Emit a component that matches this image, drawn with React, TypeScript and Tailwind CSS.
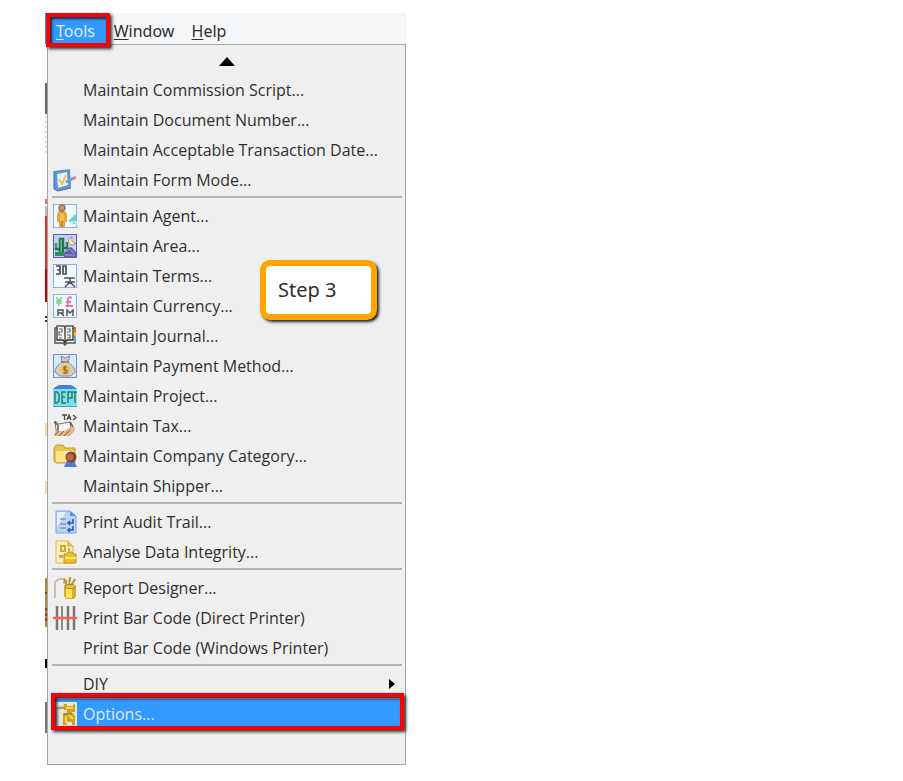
import React from "react";

type Entry = { label: string; icon?: React.ReactNode; submenu?: boolean; selected?: boolean };

function Icon({ children }: { children: React.ReactNode }) {
  return (
    <svg viewBox="0 0 24 24" className="h-6 w-6" aria-hidden="true">
      {children}
    </svg>
  );
}

const frame = <rect x=".5" y=".5" width="23" height="23" fill="#f2f9ff" stroke="#8caee8" />;

const formMode = (
  <Icon>
    <path d="M1 3 17 1l1 19-13 3-4-2z" fill="#5b93d6" />
    <path d="M1 3v18l4 2 13-3" fill="none" stroke="#3b6fb5" />
    <path d="M4 6l10-2 1 13-10 3z" fill="#eaf3fb" />
    <path d="M6 11l3 5 4-9" fill="none" stroke="#e8c860" strokeWidth="2" />
    <path d="M13 14l8-4" stroke="#6ba0dc" strokeWidth="3" />
    <path d="M20 10.500l3-1.500" stroke="#d58d80" strokeWidth="3" />
  </Icon>
);

const agent = (
  <Icon>
    {frame}
    <path d="M6 7h6l2 3v8h-2v5H6v-5H4v-8z" fill="#e9a53c" />
    <path d="M9 8v15" stroke="#a46b1c" />
    <path d="M7 9h4v8H7z" fill="#f6bd52" />
    <circle cx="9" cy="4" r="3.200" fill="#c99467" stroke="#79583f" />
    <path d="M23 10v10h-3v-2l-5-1z" fill="#62d1d8" />
    <path d="M17 18h6v3" fill="none" stroke="#b7e8ef" strokeWidth="2" />
  </Icon>
);

const area = (
  <Icon>
    <rect x=".5" y=".5" width="23" height="23" fill="#c3cff5" stroke="#5d5bb5" />
    <path d="M3 9v6h3m1 6V5h3v14m0-5h4V8" fill="none" stroke="#207447" strokeWidth="2.500" />
    <path d="M8 5v15M3 9v5M13 8v5" stroke="#67c58a" />
    <path d="M19 3a4 4 0 1 0 4 6c-3 1-5-2-4-6z" fill="#fff19a" stroke="#756a8e" strokeWidth=".6" />
    <path d="M11 19l4-5 3-1 5 5v5H11z" fill="#625fa9" />
    <path d="M13 18l3-3 5 4M12 21h10" fill="none" stroke="#a9a7e5" />
    <path d="M2 18h9v4H2z" fill="#2c905c" />
  </Icon>
);

const terms = (
  <Icon>
    {frame}
    <path d="M3 2h4v8H3M4 6h3M10 2h3v8h-3z" fill="none" stroke="#4d4d52" strokeWidth="1.700" />
    <path d="M11 14h11M12 18h10M17 14v4l-5 5M17 18l5 5" fill="none" stroke="#565656" strokeWidth="1.600" />
  </Icon>
);

const currency = (
  <Icon>
    {frame}
    <path d="M3 3l3 4 3-4M6 7v5M3 7h6M3 9h6" fill="none" stroke="#78d987" strokeWidth="1.500" />
    <path d="M19 4c-3-2-5 0-4 3v4l-2 1h7M13 8h5" fill="none" stroke="#e36ebd" strokeWidth="1.800" />
    <path d="M5 22v-6h5v3H5m3 0 3 3M14 22v-6l3 3 3-3v6" fill="none" stroke="#555" strokeWidth="1.500" />
  </Icon>
);

const journal = (
  <Icon>
    <path d="M2 4h2V2h7l1 2 1-2h7v2h2v15h-8l-2 2-2-2H2z" fill="#f7f7f4" stroke="#555" strokeWidth="1.500" />
    <path d="M4 4v12h6l2 3 2-3h6V4M12 4v15" fill="none" stroke="#333" strokeWidth="1.300" />
    <path d="M6 5h3v3H6v3h3M6 14h3M14 5h3v3h-3M14 11h3v3h-3" fill="none" stroke="#696969" strokeWidth="1.200" />
    <path d="M22 4v4" stroke="#d76845" strokeWidth="2" />
    <path d="M22 8v4" stroke="#e5bd4a" strokeWidth="2" />
    <path d="M22 12v6" stroke="#58a7c2" strokeWidth="2" />
  </Icon>
);

const payment = (
  <Icon>
    <rect x=".5" y=".5" width="23" height="23" fill="#d8e9fb" stroke="#6e91df" />
    <path d="M8 2l4 2 5-2-2 6c4 3 7 6 7 10l-4 4H7l-5-4c0-4 3-7 7-10z" fill="#d3d0c3" stroke="#8b8b88" />
    <path d="M8 8h8" stroke="#777" strokeWidth="1.500" />
    <circle cx="12" cy="16" r="5" fill="#efbf55" />
    <path d="M14 13h-3v3h3v3h-4M12 12v8" fill="none" stroke="#8f6b32" strokeWidth="1.200" />
  </Icon>
);

const project = (
  <Icon>
    <path d="M0 5c3-2 4-4 8-4h8c4 0 5 2 8 4z" fill="#477be5" />
    <path d="M0 5h24v17H0z" fill="#78e4e8" />
    <path d="M2 8v11h2l2-2V10L4 8zM13 8H9v11h4M9 13h3M15 19V8h4v6h-4M20 8h4M22 8v11" fill="none" stroke="#35757b" strokeWidth="1.500" />
    <path d="M0 22.500h24" stroke="#43a9b3" />
  </Icon>
);

const tax = (
  <Icon>
    <path d="M9 1h5M11.500 1v5M14 6l2-5 2 5M15 4h3M20 1l3 2.500-3 2.500" fill="none" stroke="#4d4843" strokeWidth="1.300" />
    <path d="M2 7l4 3 11-2 1 8-8 3-7-3z" fill="#fafafa" stroke="#77736e" />
    <path d="M1 8l4 3v5M17 8l3 5-4 6" fill="none" stroke="#5b5650" strokeWidth="1.500" />
    <path d="M2 17h9l5-3 5-2 1 4-5 6H1z" fill="#dcb58a" />
    <path d="M2 21l4-4M6 22l5-5M11 22l6-6" stroke="#866544" />
  </Icon>
);

const category = (
  <Icon>
    <path d="M1 4l2-3h7l2 3h10v15H3l-2-2z" fill="#ecc24f" stroke="#c39a38" />
    <path d="M3 7h17v11H3z" fill="#ffe48a" />
    <path d="M11 8h9" stroke="#fff4bd" strokeWidth="2" />
    <path d="M11 23l3-6h7l3 6z" fill="#5279d6" />
    <circle cx="18" cy="13" r="5.500" fill="#704a43" />
    <circle cx="17" cy="13" r="3.500" fill="#cb6239" />
  </Icon>
);

const audit = (
  <Icon>
    <path d="M3 1h14l6 5v17H3z" fill="#b9d5f5" stroke="#7ba4df" />
    <path d="M4 2h9L4 17z" fill="#e4f1fe" />
    <path d="M17 1v5h6z" fill="#5b91dc" />
    <path d="M7 9h6M7 14h6M7 18h6" stroke="#8896a6" strokeWidth="1.500" />
    <path d="M20 9v4h-5m2-2-2 2 2 2M20 16v4h-5m2-2-2 2 2 2" fill="none" stroke="#315eb6" strokeWidth="1.700" />
  </Icon>
);

const integrity = (
  <Icon>
    <path d="M3 1h12l5 5v17H3z" fill="#fff1be" stroke="#ddb44e" />
    <path d="M15 1v5h5" fill="#e8c356" stroke="#cda23d" />
    <path d="M7 5h6v7H7z" fill="#d9a526" />
    <path d="M9 7h2v3H9z" fill="#fff0ac" />
    <path d="M15 8h2v3h-2zM6 15h4v3H6z" fill="#c7a555" />
    <path d="M11 14h3l1-2h4l1 2h3v9H11z" fill="#edbd28" stroke="#bd8d24" />
    <path d="M12 18h11" stroke="#ffe477" strokeWidth="2" />
  </Icon>
);

const designer = (
  <Icon>
    <path d="M2 22V6l4-3h5v5" fill="none" stroke="#c9c2a9" strokeWidth="2" />
    <path d="M14 11l-2-7M16 10l1-9M18 10l4-7M14 6l-3-3" stroke="#bd912d" strokeWidth="2" />
    <path d="M11 10h12v10l-2 3h-8l-2-3z" fill="#d5a92c" />
    <path d="M13 11h6v11h-6z" fill="#ffe55a" />
    <ellipse cx="17" cy="10.500" rx="5.500" ry="2" fill="#edc34f" stroke="#a78132" />
  </Icon>
);

const barcode = (
  <Icon>
    <path d="M4 0v24M15 0v24M21 0v24" stroke="#777" strokeWidth="2.500" />
    <path d="M9 0v24" stroke="#8b8b8b" strokeWidth="2" />
    <path d="M0 12h24" stroke="#ff5b55" strokeWidth="2.500" />
  </Icon>
);

const options = (
  <Icon>
    <path d="M2 0h22v24H2z" fill="#e6e6e1" />
    <path d="M4 23V9c0-3 3-4 8-4" fill="none" stroke="#cfcabb" strokeWidth="3" />
    <path d="M2 6h9" stroke="#ba9b54" strokeWidth="2" />
    <path d="M11 2h3v2h6V2h2v8h-3v3h3v10h-3v-3h-5v3h-4V11h4V8h-3z" fill="#d5a01b" />
    <path d="M13 6h7M13 14v7M16 13l4 4" stroke="#ffdc4d" strokeWidth="2" />
    <path d="M11 12h10" stroke="#8f7337" />
  </Icon>
);

const groups: Entry[][] = [
  [
    { label: "Maintain Commission Script..." },
    { label: "Maintain Document Number..." },
    { label: "Maintain Acceptable Transaction Date..." },
    { label: "Maintain Form Mode...", icon: formMode },
  ],
  [
    { label: "Maintain Agent...", icon: agent },
    { label: "Maintain Area...", icon: area },
    { label: "Maintain Terms...", icon: terms },
    { label: "Maintain Currency...", icon: currency },
    { label: "Maintain Journal...", icon: journal },
    { label: "Maintain Payment Method...", icon: payment },
    { label: "Maintain Project...", icon: project },
    { label: "Maintain Tax...", icon: tax },
    { label: "Maintain Company Category...", icon: category },
    { label: "Maintain Shipper..." },
  ],
  [
    { label: "Print Audit Trail...", icon: audit },
    { label: "Analyse Data Integrity...", icon: integrity },
  ],
  [
    { label: "Report Designer...", icon: designer },
    { label: "Print Bar Code (Direct Printer)", icon: barcode },
    { label: "Print Bar Code (Windows Printer)" },
  ],
  [
    { label: "DIY", submenu: true },
    { label: "Options...", icon: options, selected: true },
  ],
];

/* Frame of annotation: red outline with a dark shadow on both sides of it. */
const outline =
  "pointer-events-none absolute border-4 border-[#fb0007] shadow-[2px_2px_3px_#333,inset_2px_2px_3px_#223]";

function Row({ entry }: { entry: Entry }) {
  return (
    <li className="relative px-[4px]">
      <button
        type="button"
        className={`flex h-[30px] w-full items-center pl-px pr-[6px] text-left ${
          entry.selected ? "bg-[#3399ff] text-[#dcecff]" : ""
        }`}
      >
        <span className="mr-[6px] h-6 w-6 shrink-0">{entry.icon}</span>
        <span className="grow whitespace-nowrap">{entry.label}</span>
        {entry.submenu && (
          <svg viewBox="0 0 6 10" className="h-[10px] w-[6px]" aria-hidden="true">
            <path d="M0 0l6 5-6 5z" fill="#000" />
          </svg>
        )}
      </button>
      {entry.selected && <span className={`${outline} -top-[6px] -bottom-px left-[3px] right-px`} />}
    </li>
  );
}

/* Sliver of the window lying behind the open menu. */
function WindowEdge() {
  return (
    <svg viewBox="0 0 2 721" className="h-[721px] w-[2px] shrink-0" aria-hidden="true">
      <path d="M1 39v31" stroke="#666" strokeWidth="2" />
      <path d="M1 72v38" stroke="#ddd" strokeWidth="2" strokeDasharray="2 3" />
      <path d="M1 155v5" stroke="#e66" strokeWidth="2" />
      <path d="M1 162v10" stroke="#bbb" strokeWidth="2" />
      <path d="M1 172v86" stroke="#e32c30" strokeWidth="2" />
      <path d="M1 225v33" stroke="#c10008" strokeWidth="2" />
      <path d="M1 272v2m0 2v2" stroke="#333" strokeWidth="2" />
      <path d="M1 379v13M1 437v13" stroke="#fbd5a6" strokeWidth="2" />
      <path d="M1 534v49" stroke="#b58a35" strokeWidth="2" />
      <path d="M1 548v2m0 14v13" stroke="#a33a1b" strokeWidth="2" strokeDasharray="3 2" />
      <path d="M1 615v9" stroke="#000" strokeWidth="2" />
      <path d="M1 658v31" stroke="#777" strokeWidth="2" />
    </svg>
  );
}

export default function App() {
  return (
    <main className="min-h-screen bg-white pt-[13px] pl-[45px] font-['Noto_Sans','Open_Sans',sans-serif] text-base text-[#2f2f2f]">
      <div className="w-[361px] max-w-full">
        <nav className="flex h-[31px] bg-[#f4f6f8] leading-9">
          <div className="relative z-10 w-[65px]">
            <button type="button" className="h-full w-full bg-[#3399ff] pr-1 text-[#dcecff]">
              <u className="underline-offset-2">T</u>ools
            </button>
            <span className={`${outline} top-0 -bottom-[3px] left-px right-0`} />
          </div>
          <button type="button" className="w-[68px] text-center">
            <u className="underline-offset-2">W</u>indow
          </button>
          <button type="button" className="ml-[11px] w-10 text-center">
            <u className="underline-offset-2">H</u>elp
          </button>
        </nav>
        <div className="flex">
          <WindowEdge />
          <div className="relative min-w-0 grow border border-[#a4a4a4] bg-[#efefef] pb-[33px] font-['Open_Sans','Noto_Sans',sans-serif]">
            <button type="button" aria-label="Scroll up" className="flex h-[30px] w-full items-center justify-center pt-[2px]">
              <svg viewBox="0 0 16 9" className="h-[9px] w-4" aria-hidden="true">
                <path d="M8 0l8 9H0z" fill="#000" />
              </svg>
            </button>
            {groups.map((group, i) => (
              <ul key={i}>
                {i > 0 && (
                  <li className="flex h-[6px] items-start pr-[3px] pl-1 pt-px">
                    <hr className="h-[2px] w-full border-0 bg-[#b3b3b3]" />
                  </li>
                )}
                {group.map((entry) => (
                  <Row key={entry.label} entry={entry} />
                ))}
              </ul>
            ))}
            <div className="absolute top-[215px] left-[212px] flex h-[60px] w-[117px] items-center rounded-[10px] border-[6px] border-[#ffa500] bg-white pl-3 font-['Noto_Sans','Open_Sans',sans-serif] text-xl shadow-[2px_2px_3px_#222]">
              Step 3
            </div>
          </div>
        </div>
      </div>
    </main>
  );
}
